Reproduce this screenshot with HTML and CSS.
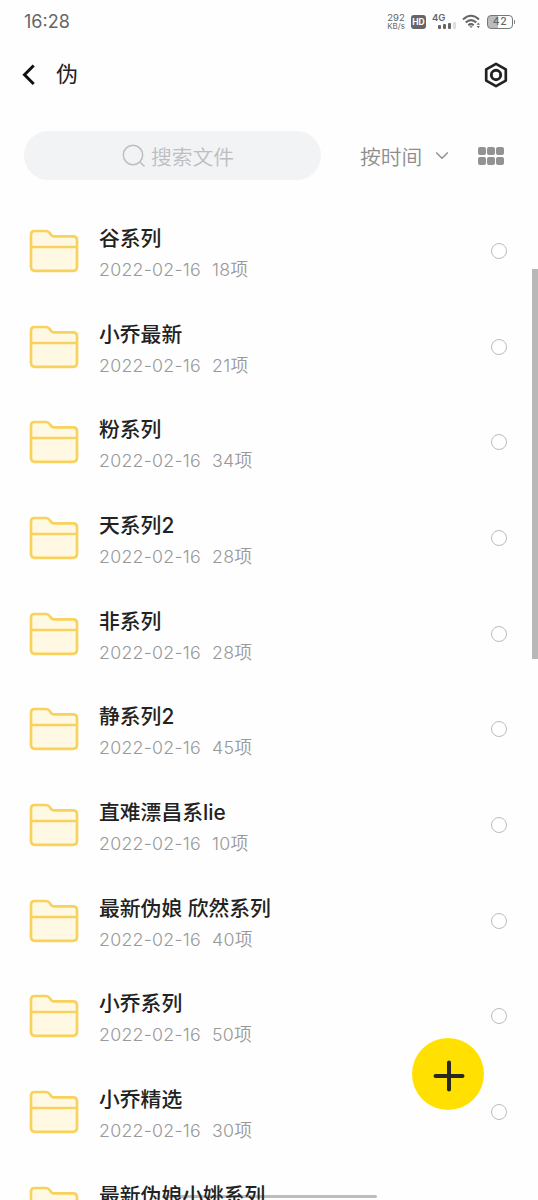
FILE: index.html
```html
<!DOCTYPE html>
<html lang="zh-CN">
<head>
<meta charset="utf-8">
<title>伪</title>
<link rel="stylesheet" href="styles.css">
</head>
<body>
<svg class="defs" width="0" height="0" aria-hidden="true">
  <symbol id="folder" viewBox="0 0 50 44">
    <path d="M2 5.500Q2 2 5.500 2H17Q19 2 20.200 3.500L22.300 6.200Q23.200 7.300 24.800 7.300H44Q48 7.300 48 11.300V37.800Q48 41.800 44 41.800H6Q2 41.800 2 37.800Z" fill="#fff9e4" stroke="#f9d25c" stroke-width="2.700" stroke-linejoin="round"/>
    <path d="M2 18H48" stroke="#f9d25c" stroke-width="2.400"/>
  </symbol>
</svg>
<div class="screen">
  <header class="status">
    <span class="clock">16:28</span>
    <div class="indicators">
      <div class="speed"><span class="rate">292</span><span class="unit">KB/s</span></div>
      <span class="hd">HD</span>
      <div class="cell">
        <span class="gen">4G</span>
        <div class="bars"><i class="b1"></i><i class="b2"></i><i class="b3"></i><i class="b4"></i></div>
      </div>
      <svg class="wifi" width="20" height="16" viewBox="0 0 20 16" fill="none" stroke="#666" stroke-width="2">
        <path d="M1 5.400Q9 -1.800 17 5.400M3.700 8.500Q9 3.700 14.300 8.500M6.300 11.300Q9 9 11.700 11.300"/>
        <path d="M7.300 12.200H10.700L9 14Z" fill="#666" stroke="none"/>
        <path d="M14.700 10.700L16.300 8.500L17.900 10.700ZM14.700 12L16.300 14.200L17.900 12Z" fill="#666" stroke="none"/>
      </svg>
      <div class="battery"><span>42</span></div>
    </div>
  </header>
  <nav class="titlebar">
    <svg class="back" width="14" height="22" viewBox="0 0 14 22" fill="none" stroke="#111" stroke-width="3"><path d="M11.700 1.500L2.500 10.800L11.700 20"/></svg>
    <h1>伪</h1>
    <svg class="settings" width="24" height="26" viewBox="0 0 24 26" fill="none" stroke="#222"><path d="M12 1.900L21.800 7.400V18.600L12 24.100L2.200 18.600V7.400Z" stroke-width="2.700" stroke-linejoin="round"/><circle cx="12" cy="13" r="4.700" stroke-width="2.900"/></svg>
  </nav>
  <div class="tools">
    <div class="search">
      <svg width="24" height="24" viewBox="0 0 24 24" fill="none" stroke="#bcbec1" stroke-width="1.500"><circle cx="11" cy="11" r="9.700"/><path d="M18 18L22.500 22.500"/></svg>
      <span>搜索文件</span>
    </div>
    <span class="sort">按时间</span>
    <svg class="chevron" width="14" height="9" viewBox="0 0 14 9" fill="none" stroke="#8d8d8d" stroke-width="1.300"><path d="M1.200 1.500L7 7.300L12.800 1.500"/></svg>
    <div class="grid"><i></i><i></i><i></i><i></i><i></i><i></i></div>
  </div>
  <main class="list">
    <div class="row"><svg class="folder"><use href="#folder"/></svg><div class="info"><div class="name">谷系列</div><div class="meta"><span class="date">2022-02-16</span><span>18项</span></div></div><i class="check"></i></div>
    <div class="row"><svg class="folder"><use href="#folder"/></svg><div class="info"><div class="name">小乔最新</div><div class="meta"><span class="date">2022-02-16</span><span>21项</span></div></div><i class="check"></i></div>
    <div class="row"><svg class="folder"><use href="#folder"/></svg><div class="info"><div class="name">粉系列</div><div class="meta"><span class="date">2022-02-16</span><span>34项</span></div></div><i class="check"></i></div>
    <div class="row"><svg class="folder"><use href="#folder"/></svg><div class="info"><div class="name">天系列2</div><div class="meta"><span class="date">2022-02-16</span><span>28项</span></div></div><i class="check"></i></div>
    <div class="row"><svg class="folder"><use href="#folder"/></svg><div class="info"><div class="name">非系列</div><div class="meta"><span class="date">2022-02-16</span><span>28项</span></div></div><i class="check"></i></div>
    <div class="row"><svg class="folder"><use href="#folder"/></svg><div class="info"><div class="name">静系列2</div><div class="meta"><span class="date">2022-02-16</span><span>45项</span></div></div><i class="check"></i></div>
    <div class="row"><svg class="folder"><use href="#folder"/></svg><div class="info"><div class="name">直难漂昌系lie</div><div class="meta"><span class="date">2022-02-16</span><span>10项</span></div></div><i class="check"></i></div>
    <div class="row"><svg class="folder"><use href="#folder"/></svg><div class="info"><div class="name">最新伪娘 欣然系列</div><div class="meta"><span class="date">2022-02-16</span><span>40项</span></div></div><i class="check"></i></div>
    <div class="row"><svg class="folder"><use href="#folder"/></svg><div class="info"><div class="name">小乔系列</div><div class="meta"><span class="date">2022-02-16</span><span>50项</span></div></div><i class="check"></i></div>
    <div class="row"><svg class="folder"><use href="#folder"/></svg><div class="info"><div class="name">小乔精选</div><div class="meta"><span class="date">2022-02-16</span><span>30项</span></div></div><i class="check"></i></div>
    <div class="row"><svg class="folder"><use href="#folder"/></svg><div class="info"><div class="name">最新伪娘小姚系列</div></div></div>
  </main>
  <div class="scrollbar"></div>
  <div class="home"></div>
  <button class="add" aria-label="添加"><svg width="32" height="32" viewBox="0 0 32 32" stroke="#272822" stroke-width="4" stroke-linecap="round"><path d="M16 2.500V29.500M2.500 16H29.500"/></svg></button>
</div>
</body>
</html>
```
FILE: styles.css
```css
* { box-sizing: border-box; }
body { margin: 0; background: #fefefe; font-family: Inter, "Noto Sans CJK SC", sans-serif; color: #222; }
i { display: block; }
.defs { position: absolute; }
.screen { position: relative; isolation: isolate; width: 538px; height: 1200px; overflow: hidden; display: flex; flex-direction: column; }

.status { height: 42px; flex: none; display: flex; align-items: center; justify-content: space-between; padding: 1px 23px 0 24px; color: #666; }
.clock { font: 18px/24px Inter, sans-serif; letter-spacing: 0; padding-top: 1px; }
.indicators { display: flex; align-items: center; }
.speed { display: flex; flex-direction: column; align-items: center; width: 18px; margin-right: 6px; }
.rate { font-size: 9.500px; line-height: 9px; }
.unit { font-size: 8px; line-height: 8px; }
.hd { width: 15px; height: 14px; border-radius: 3px; background: #666; color: #fff; font-size: 8.500px; font-weight: 700; line-height: 14px; text-align: center; margin-right: 6px; }
.cell { display: flex; flex-direction: column; width: 24px; height: 17px; margin-right: 6px; }
.gen { font-size: 9.500px; font-weight: 600; line-height: 9px; height: 9px; }
.bars { display: flex; gap: 2px; align-items: flex-end; height: 7px; padding-left: 6px; }
.bars i { width: 3px; background: #666; border-radius: 1px; flex: none; }
.bars .b1 { height: 4px; }
.bars .b2 { height: 5px; }
.bars .b3 { height: 6px; }
.bars .b4 { height: 7px; background: #dedede; }
.wifi { margin-right: 5px; }
.battery { position: relative; width: 26px; height: 14px; border: 1.500px solid #777; border-radius: 4px; background: linear-gradient(90deg, #bbb 42%, #fefefe 42%); font-size: 10.500px; font-weight: 500; line-height: 12px; text-align: center; letter-spacing: 0.500px; margin-right: 2px; }
.battery::after { content: ""; position: absolute; right: -3px; top: 4px; width: 1.500px; height: 4px; background: #888; }

.titlebar { height: 65px; flex: none; display: flex; align-items: center; padding: 0 30px 0 22px; }
.titlebar h1 { margin: -1px auto 0 20px; font-size: 22px; font-weight: 400; line-height: 30px; }

.tools { height: 96px; flex: none; display: flex; align-items: center; padding: 1px 34px 0 24px; }
.search { width: 297px; height: 49px; border-radius: 25px; background: #f2f3f5; display: flex; align-items: center; justify-content: center; gap: 5px; padding-left: 11px; color: #bcbec1; font-size: 20.800px; font-weight: 350; }
.sort { margin-left: 39px; font-size: 20.800px; color: #8d8d8d; font-weight: 350; white-space: nowrap; }
.chevron { margin-left: 13px; }
.grid { display: grid; grid-template-columns: repeat(3, 8px); gap: 2px 1px; margin-left: auto; }
.grid i { height: 8px; border-radius: 2px; background: #929292; }

.list { flex: none; }
.row { height: 95.680px; display: flex; align-items: center; padding: 0 31px 0 29px; }
.folder { width: 50px; height: 44px; flex: none; }
.info { margin-left: 20px; height: 62px; flex: 1; margin-top: 6px; }
.name { font-size: 20.800px; font-weight: 500; line-height: 31px; color: #222; white-space: nowrap; }
.meta { display: flex; gap: 10px; font-size: 17.800px; font-weight: 350; letter-spacing: 0.250px; line-height: 31px; color: #999; white-space: nowrap; }
.date { width: 103px; }
.check { width: 16px; height: 16px; border: 1px solid #b9bcc2; border-radius: 50%; background: #fff; }

.scrollbar { position: absolute; right: 0; top: 269px; width: 6px; height: 390px; background: #b8b8b8; }
.home { position: absolute; z-index: -1; left: 162px; top: 1195px; width: 215px; height: 3px; border-radius: 2px; background: #bdbdbd; }
.add { position: absolute; left: 412px; top: 1038px; width: 72px; height: 72px; border: 0; border-radius: 50%; background: #ffe000; display: grid; place-items: center; padding: 3px 0 0 1px; }
```
